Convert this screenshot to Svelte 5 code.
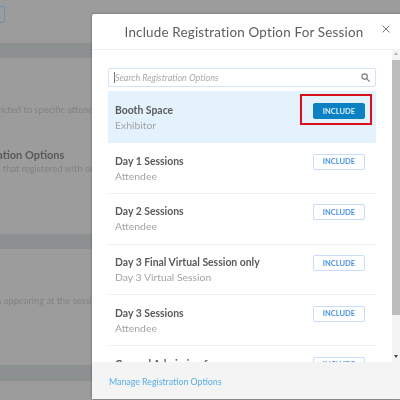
<script>
  const options = [
    { name: "Booth Space", type: "Exhibitor", active: true },
    { name: "Day 1 Sessions", type: "Attendee" },
    { name: "Day 2 Sessions", type: "Attendee" },
    { name: "Day 3 Final Virtual Session only", type: "Day 3 Virtual Session" },
    { name: "Day 3 Sessions", type: "Attendee" },
    { name: "General Admission for anyone", type: "Attendee" },
  ];
</script>

<div class="page">
  <div class="backdrop">
    <div class="top-box"></div>
    <div class="band first"></div>
    <p class="muted restricted">Sessions restricted to specific attendees</p>
    <p class="heading">Registration Options</p>
    <p class="muted registered">Attendees that registered with one</p>
    <div class="band second"></div>
    <p class="muted appearing">Speakers appearing at the session</p>
    <div class="band third"></div>
  </div>

  <section class="modal">
    <header>
      <h1>Include Registration Option For Session</h1>
      <button class="close" aria-label="Close">
        <svg width="8" height="8" viewBox="0 0 8 8"><path d="M.5.5l7 7M7.5.5l-7 7" /></svg>
      </button>
    </header>

    <div class="body">
      <div class="content">
        <div class="search">
          <span class="placeholder">Search Registration Options</span>
          <svg width="9" height="9" viewBox="0 0 9 9"><circle cx="3.6" cy="3.6" r="2.7" /><path d="M5.6 5.6l3 3" /></svg>
        </div>
        <ul>
          {#each options as opt}
            <li class:active={opt.active}>
              <div class="info">
                <div class="name">{opt.name}</div>
                <div class="type">{opt.type}</div>
              </div>
              <button class="include">INCLUDE</button>
            </li>
          {/each}
        </ul>
      </div>
      <div class="scrollbar">
        <span class="arrow up"></span>
        <div class="thumb"></div>
        <span class="arrow down"></span>
      </div>
    </div>

    <footer>Manage Registration Options</footer>
  </section>
</div>

<style>
  :global(body) {
    margin: 0;
  }
  .page {
    position: relative;
    width: 400px;
    height: 400px;
    overflow: hidden;
    background: #9c9c9c;
    font-family: Lato, "Open Sans", sans-serif;
    filter: blur(0.45px);
  }
  .backdrop {
    display: flex;
    flex-direction: column;
    height: 100%;
  }
  .top-box {
    width: 5px;
    height: 15px;
    margin: 6px 0 0 -2px;
    border: 1px solid #6d94ad;
    border-radius: 2px;
  }
  .band {
    height: 15px;
    background: #8d9091;
    flex: none;
  }
  .band.first { margin-top: 20px; }
  .band.second { margin-top: 58px; }
  .band.third { margin-top: 57px; height: 16px; }
  p {
    margin: 0;
    white-space: nowrap;
    font-size: 9.3px;
    line-height: 14px;
  }
  .muted { color: #828282; }
  .heading {
    margin: 31px 0 0 -37px;
    font-size: 11px;
    font-weight: 700;
    color: #5a5a5a;
  }
  .restricted { margin: 45px 0 0 -55px; }
  .registered { margin: 0 0 0 -41px; }
  .appearing { margin: 45px 0 0 -35px; }

  .modal {
    position: absolute;
    left: 92px;
    top: 14px;
    width: 308px;
    height: 385px;
    display: flex;
    flex-direction: column;
    background: #fff;
    border-radius: 2px 0 0 2px;
    box-shadow: 0 0 3px rgba(0, 0, 0, 0.35);
  }
  header {
    height: 36px;
    flex: none;
    display: flex;
    align-items: center;
    justify-content: center;
    position: relative;
    border-bottom: 1px solid #efefef;
    box-sizing: border-box;
  }
  h1 {
    margin: 0 0 0 -4px;
    font-size: 13.4px;
    font-weight: 400;
    letter-spacing: 0.2px;
    color: #5c5c5c;
  }
  .close {
    position: absolute;
    right: 10px;
    top: 11px;
    padding: 0;
    border: 0;
    background: none;
    line-height: 0;
  }
  .close path {
    stroke: #777;
    fill: none;
  }
  .body {
    flex: 1;
    min-height: 0;
    display: flex;
    overflow: hidden;
  }
  .content {
    flex: 1;
    padding: 18px 16px 0;
    min-width: 0;
  }
  .search {
    height: 19px;
    box-sizing: border-box;
    display: flex;
    align-items: center;
    justify-content: space-between;
    padding: 0 5px;
    border: 1px solid #d5e3f7;
    border-radius: 2px;
  }
  .placeholder {
    font-size: 9px;
    font-style: italic;
    color: #a9a9a9;
    border-left: 1px solid #777;
    line-height: 11px;
  }
  .search svg {
    fill: none;
    stroke: #7c7c7c;
    stroke-width: 1.2;
  }
  ul {
    list-style: none;
    margin: 4px 0 0;
    padding: 0;
  }
  li {
    height: 50.8px;
    box-sizing: border-box;
    display: flex;
    justify-content: space-between;
    align-items: flex-start;
    padding: 9.5px 11px 0 7px;
    border-bottom: 1px solid #f0f0f0;
  }
  li.active {
    background: #e3f2fc;
    border-bottom: 0;
    height: 52px;
    padding-top: 11px;
    position: relative;
  }
  li.active::after {
    content: "";
    position: absolute;
    left: 192px;
    top: 3px;
    width: 68px;
    height: 27px;
    border: 2px solid #d9101c;
  }
  .name {
    font-size: 10.4px;
    line-height: 16px;
    font-weight: 700;
    color: #5a5a5a;
  }
  .type {
    font-size: 10.4px;
    line-height: 14px;
    color: #a3a3a3;
  }
  .include {
    width: 52px;
    height: 16px;
    margin-top: 1px;
    padding: 0;
    border: 1px solid #c9dcf9;
    border-radius: 2px;
    background: #fff;
    font-family: inherit;
    font-size: 7.5px;
    font-weight: 700;
    color: #4d94e0;
  }
  .active .include {
    background: #0b81c4;
    border-color: #0b81c4;
    color: #d9eefa;
  }
  .scrollbar {
    width: 8px;
    flex: none;
    background: #f4f4f4;
    display: flex;
    flex-direction: column;
  }
  .thumb {
    height: 255px;
    margin-top: 3px;
    background: #bdbdbd;
  }
  .arrow {
    height: 7px;
    display: flex;
    justify-content: center;
    align-items: center;
    flex: none;
  }
  .arrow::before {
    content: "";
    border-left: 2px solid transparent;
    border-right: 2px solid transparent;
  }
  .arrow.up::before { border-bottom: 3px solid #b5b5b5; }
  .arrow.down { margin-top: auto; margin-bottom: 2px; }
  .arrow.down::before { border-top: 3px solid #444; }
  footer {
    height: 37px;
    flex: none;
    box-sizing: border-box;
    padding: 1px 0 0 17px;
    display: flex;
    align-items: center;
    background: #f4f4f4;
    font-size: 8.8px;
    color: #55aee2;
  }
</style>
